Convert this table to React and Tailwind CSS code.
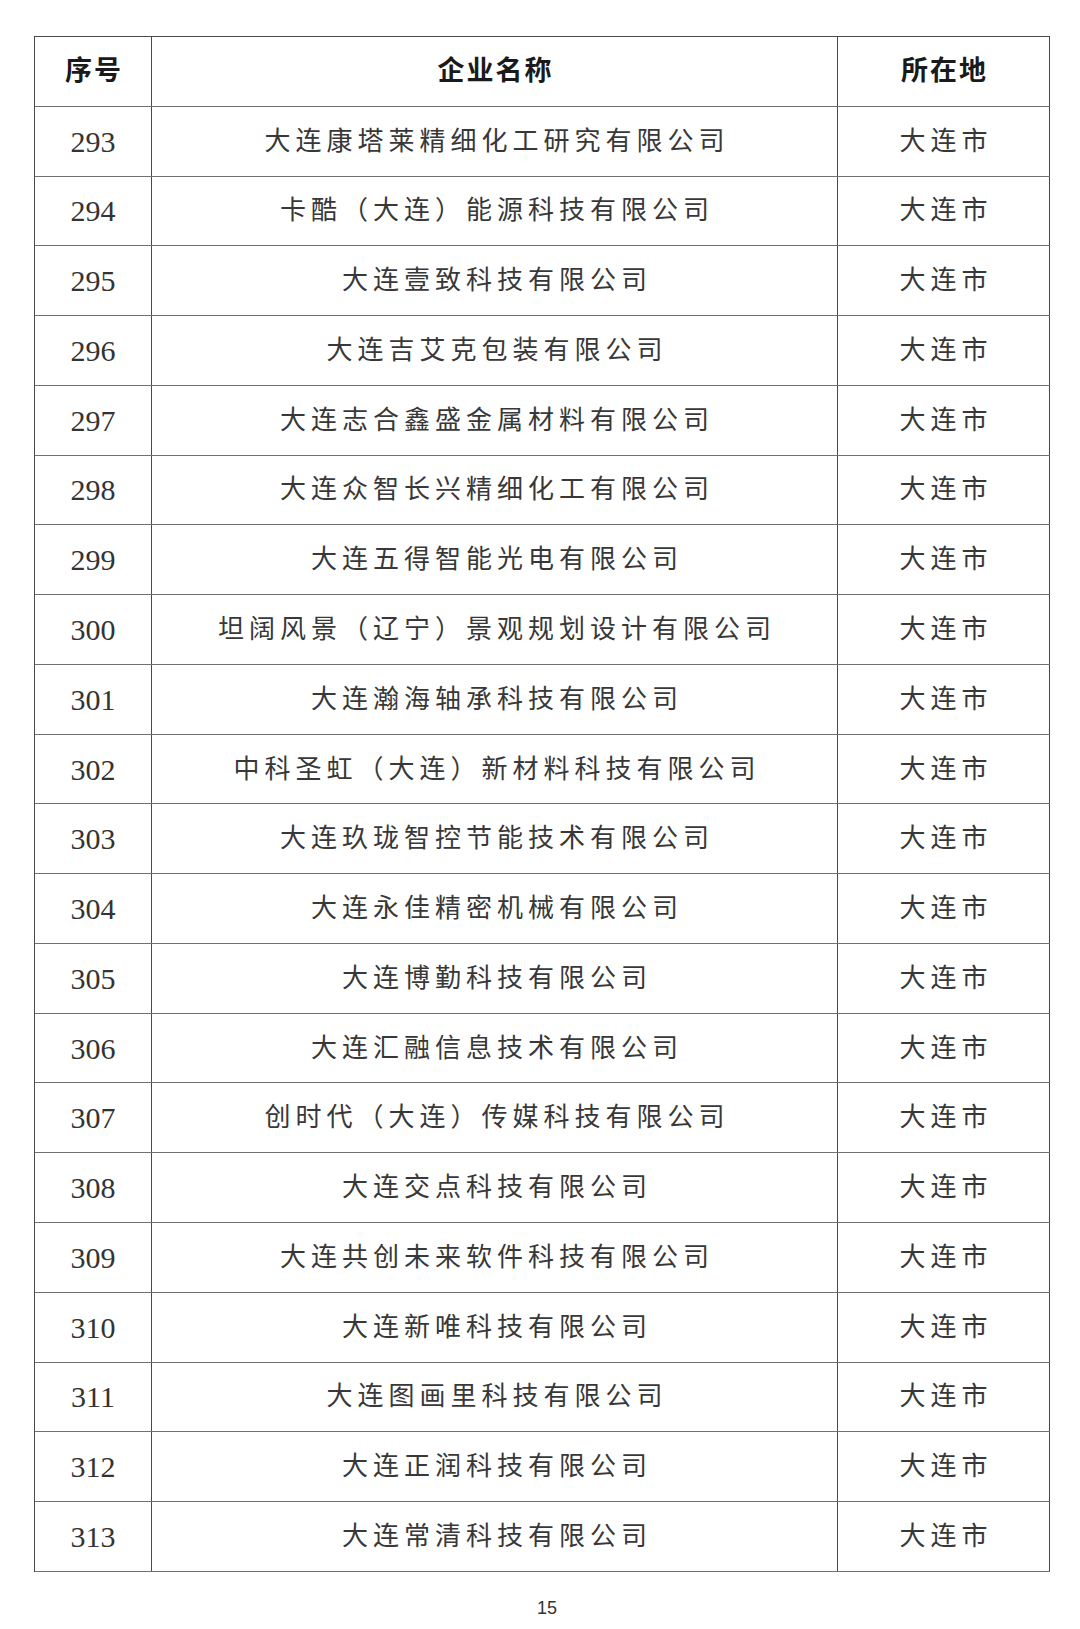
import React from "react";

const rows = [
  ["293", "大连康塔莱精细化工研究有限公司"],
  ["294", "卡酷（大连）能源科技有限公司"],
  ["295", "大连壹致科技有限公司"],
  ["296", "大连吉艾克包装有限公司"],
  ["297", "大连志合鑫盛金属材料有限公司"],
  ["298", "大连众智长兴精细化工有限公司"],
  ["299", "大连五得智能光电有限公司"],
  ["300", "坦阔风景（辽宁）景观规划设计有限公司"],
  ["301", "大连瀚海轴承科技有限公司"],
  ["302", "中科圣虹（大连）新材料科技有限公司"],
  ["303", "大连玖珑智控节能技术有限公司"],
  ["304", "大连永佳精密机械有限公司"],
  ["305", "大连博勤科技有限公司"],
  ["306", "大连汇融信息技术有限公司"],
  ["307", "创时代（大连）传媒科技有限公司"],
  ["308", "大连交点科技有限公司"],
  ["309", "大连共创未来软件科技有限公司"],
  ["310", "大连新唯科技有限公司"],
  ["311", "大连图画里科技有限公司"],
  ["312", "大连正润科技有限公司"],
  ["313", "大连常清科技有限公司"],
];

const font = { fontFamily: '"Liberation Serif", "Noto Sans CJK SC", serif' };

function Row({ a, b, c, head }) {
  const txt = head
    ? "text-[27px] font-semibold text-[#1a1a1a] tracking-[2px] pl-[2px]"
    : "text-[26px] text-[#383838] tracking-[5px] pl-[5px]";
  return (
    <div className="flex h-[69.77px] border-b border-[#707070]">
      <div className="w-[117px] flex items-center justify-center border-r border-[#4a4a4a]">
        <span className={head ? txt : "text-[30px] text-[#333]"}>{a}</span>
      </div>
      <div className="w-[686px] flex items-center justify-center border-r border-[#4a4a4a]">
        <span className={txt}>{b}</span>
      </div>
      <div className="w-[212px] flex items-center justify-center border-r border-[#4a4a4a]">
        <span className={txt}>{c}</span>
      </div>
    </div>
  );
}

export default function App() {
  return (
    <div className="w-[1080px] h-[1629px] bg-white overflow-hidden" style={font}>
      <div className="ml-[34px] mt-[36px] w-[1016px] border-t border-l border-[#4a4a4a]">
        <Row head a="序号" b="企业名称" c="所在地" />
        {rows.map(([n, name]) => (
          <Row key={n} a={n} b={name} c="大连市" />
        ))}
      </div>
      <div
        className="mt-[23px] pl-[14px] text-center text-[18px] text-[#333]"
        style={{ fontFamily: '"Liberation Sans", sans-serif' }}
      >
        15
      </div>
    </div>
  );
}
